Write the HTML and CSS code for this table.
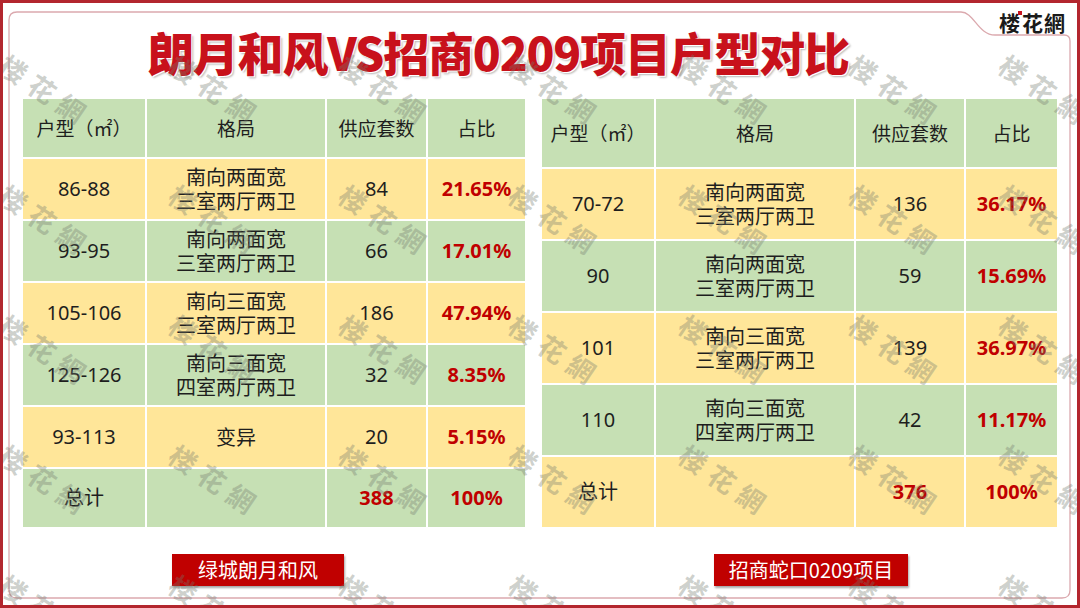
FILE: index.html
```html
<!DOCTYPE html>
<html lang="zh-CN">
<head>
<meta charset="utf-8">
<title>朗月和风VS招商0209项目户型对比</title>
<link rel="stylesheet" href="styles.css">
</head>
<body>
<div class="slide">
  <svg class="frame" viewBox="0 0 1074 602" width="1074" height="602" aria-hidden="true">
    <path d="M14 9 H958 C971 9 975 32 992 32 H1061 Q1067 32 1067 38 V587 Q1067 595 1059 595 H14 Q6 595 6 587 V17 Q6 9 14 9 Z" fill="none" stroke="#dba9ae" stroke-width="1.3"/>
  </svg>
  <div class="logo">楼<i class="logo-dot"></i>花網</div>

  <h1 class="title">朗月和风VS招商0209项目户型对比</h1>

  <div class="tables">
    <table class="grid grid-left">
      <colgroup><col class="l1"><col class="l2"><col class="l3"><col class="l4"></colgroup>
      <tr class="g head"><td>户型（㎡）</td><td>格局</td><td>供应套数</td><td>占比</td></tr>
      <tr class="y"><td>86-88</td><td class="lay">南向两面宽<br>三室两厅两卫</td><td>84</td><td class="pct">21.65%</td></tr>
      <tr class="g"><td>93-95</td><td class="lay">南向两面宽<br>三室两厅两卫</td><td>66</td><td class="pct">17.01%</td></tr>
      <tr class="y"><td>105-106</td><td class="lay">南向三面宽<br>三室两厅两卫</td><td>186</td><td class="pct">47.94%</td></tr>
      <tr class="g"><td>125-126</td><td class="lay">南向三面宽<br>四室两厅两卫</td><td>32</td><td class="pct">8.35%</td></tr>
      <tr class="y"><td>93-113</td><td class="lay">变异</td><td>20</td><td class="pct">5.15%</td></tr>
      <tr class="g total"><td>总计</td><td></td><td class="pct">388</td><td class="pct">100%</td></tr>
    </table>

    <table class="grid grid-right">
      <colgroup><col class="r1"><col class="r2"><col class="r3"><col class="r4"></colgroup>
      <tr class="g head"><td>户型（㎡）</td><td>格局</td><td>供应套数</td><td>占比</td></tr>
      <tr class="y"><td>70-72</td><td class="lay">南向两面宽<br>三室两厅两卫</td><td>136</td><td class="pct">36.17%</td></tr>
      <tr class="g"><td>90</td><td class="lay">南向两面宽<br>三室两厅两卫</td><td>59</td><td class="pct">15.69%</td></tr>
      <tr class="y"><td>101</td><td class="lay">南向三面宽<br>三室两厅两卫</td><td>139</td><td class="pct">36.97%</td></tr>
      <tr class="g"><td>110</td><td class="lay">南向三面宽<br>四室两厅两卫</td><td>42</td><td class="pct">11.17%</td></tr>
      <tr class="y total"><td>总计</td><td></td><td class="pct">376</td><td class="pct">100%</td></tr>
    </table>
  </div>

  <div class="labels">
    <div class="label label-left">绿城朗月和风</div>
    <div class="label label-right">招商蛇口0209项目</div>
  </div>

  <div class="watermarks" aria-hidden="true">
    <span class="wm">楼花網</span><span class="wm">楼花網</span><span class="wm">楼花網</span><span class="wm">楼花網</span><span class="wm">楼花網</span><span class="wm">楼花網</span><span class="wm">楼花網</span>
    <span class="wm">楼花網</span><span class="wm">楼花網</span><span class="wm">楼花網</span><span class="wm">楼花網</span><span class="wm">楼花網</span><span class="wm">楼花網</span><span class="wm">楼花網</span>
    <span class="wm">楼花網</span><span class="wm">楼花網</span><span class="wm">楼花網</span><span class="wm">楼花網</span><span class="wm">楼花網</span><span class="wm">楼花網</span><span class="wm">楼花網</span>
    <span class="wm">楼花網</span><span class="wm">楼花網</span><span class="wm">楼花網</span><span class="wm">楼花網</span><span class="wm">楼花網</span><span class="wm">楼花網</span><span class="wm">楼花網</span>
    <span class="wm">楼花網</span><span class="wm">楼花網</span><span class="wm">楼花網</span><span class="wm">楼花網</span><span class="wm">楼花網</span><span class="wm">楼花網</span><span class="wm">楼花網</span>
  </div>
</div>
</body>
</html>
```

FILE: styles.css
```css
* { box-sizing: border-box; }

html, body {
  margin: 0;
  padding: 0;
  background: #fff;
}

body {
  font-family: "Noto Sans", "Noto Sans CJK SC", sans-serif;
}

.slide {
  position: relative;
  width: 1080px;
  height: 608px;
  border: 3px solid #b3262e;
  background: #fff;
  overflow: hidden;
}

.frame {
  position: absolute;
  left: 0;
  top: 0;
  pointer-events: none;
}

.logo {
  position: absolute;
  top: 6px;
  right: 11px;
  font-family: "Noto Sans CJK SC", sans-serif;
  font-weight: 700;
  font-size: 21px;
  line-height: 26px;
  letter-spacing: 1px;
  color: #1a1a1a;
}

.logo-dot {
  display: inline-block;
  width: 4px;
  height: 4px;
  margin: 2px 0 0 -3px;
  vertical-align: top;
  background: #c8141e;
}

.title {
  margin: 25px 0 0;
  padding-left: 145px;
  font-family: "Noto Sans CJK SC", "Noto Sans", sans-serif;
  font-weight: 900;
  font-size: 46px;
  line-height: 46px;
  letter-spacing: -1.2px;
  color: #c8111b;
  white-space: nowrap;
  text-shadow: 1px 1px 0 #fff, 2px 2px 2px rgba(0, 0, 0, 0.28);
}

.tables {
  display: flex;
  gap: 13px;
  margin-top: 23px;
  padding-left: 18px;
}

.grid {
  border-collapse: collapse;
  table-layout: fixed;
  height: 430px;
  font-size: 20px;
  color: #1e1e1e;
  text-align: center;
}

.grid td {
  border: 2px solid #fff;
  padding: 0;
  vertical-align: middle;
  line-height: 24px;
  white-space: nowrap;
}

.grid-left { width: 504px; }
.grid-right { width: 517px; }

.l1 { width: 124px; }
.l2 { width: 180px; }
.l3 { width: 101px; }
.l4 { width: 99px; }

.r1 { width: 114px; }
.r2 { width: 200px; }
.r3 { width: 110px; }
.r4 { width: 93px; }

.grid-left tr { height: 62px; }
.grid-left tr.head,
.grid-left tr.total { height: 60px; }

.grid-right tr { height: 72px; }
.grid-right tr.head { height: 70px; }

.g td { background: #c6e0b4; }
.y td { background: #ffe699; }

.head td {
  font-family: "Noto Sans CJK SC", sans-serif;
  font-size: 19px;
}

.lay {
  font-family: "Noto Sans CJK SC", sans-serif;
  font-size: 20px;
  line-height: 24px;
}

.pct {
  color: #c00000;
  font-weight: 700;
}

.labels {
  display: flex;
  margin-top: 25px;
  padding-left: 169px;
}

.label {
  height: 32px;
  background: #c00000;
  color: #fff;
  font-family: "Noto Sans CJK SC", sans-serif;
  font-size: 20px;
  line-height: 32px;
  text-align: center;
  box-shadow: 1px 2px 2px rgba(0, 0, 0, 0.35);
}

.label-left { width: 172px; }
.label-right { width: 194px; margin-left: 370px; }

.watermarks {
  position: absolute;
  left: 7px;
  top: 47px;
  display: grid;
  grid-template-columns: 170px 170px 170px 170px 170px 150px 100px;
  grid-template-rows: repeat(5, 130px);
  pointer-events: none;
}

.wm {
  display: block;
  width: 0;
  white-space: nowrap;
  transform: rotate(34deg);
  transform-origin: 0 0;
  font-family: "Noto Sans CJK SC", sans-serif;
  font-weight: 700;
  font-size: 27px;
  line-height: 1;
  letter-spacing: 8px;
  color: rgba(115, 122, 110, 0.36);
}
```
